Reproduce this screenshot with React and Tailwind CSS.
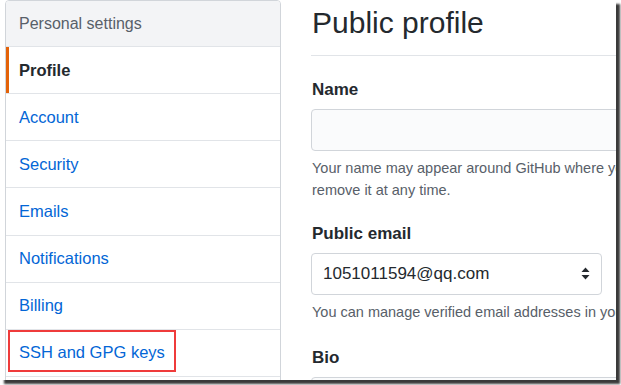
import React from "react";

const items = ["Account", "Security", "Emails", "Notifications", "Billing"];

export default function App() {
  return (
    <div className="w-[621px] h-[385px] bg-white overflow-hidden" style={{ fontFamily: '"Liberation Sans", Arial, sans-serif' }}>
      <div className="relative w-[616px] h-[380px] bg-white shadow-[4px_4px_2px_#3a3a3a]">
        <div className="w-[616px] h-[380px] overflow-hidden flex items-start">
          {/* Sidebar */}
          <div className="ml-[5px] w-[276px] shrink-0 border border-[#d1d5da] rounded-t-[4px] overflow-hidden">
            <div className="h-[46px] bg-[#f3f4f6] border-b border-[#e1e4e8] flex items-center pl-[13px] text-[16px] text-[#586069]">
              Personal settings
            </div>
            <div className="relative h-[47.14px] border-b border-[#e1e4e8] flex items-center pl-[13px] text-[16.5px] font-bold text-[#24292e]">
              <div className="absolute left-0 top-0 bottom-0 w-[3px] bg-[#e36209]" />
              Profile
            </div>
            {items.map((t) => (
              <div key={t} className="h-[47.14px] border-b border-[#e1e4e8] flex items-center pl-[13px] text-[16.5px] text-[#0366d6]">
                {t}
              </div>
            ))}
            <div className="relative h-[47.14px] border-b border-[#e1e4e8] flex items-center pl-[13px] text-[16.5px] text-[#0366d6]">
              SSH and GPG keys
              <div className="absolute left-[2px] top-[0.5px] w-[168px] h-[42px] border-2 border-[#ef3b3b]" />
            </div>
            <div className="h-[47px]" />
          </div>

          {/* Main */}
          <div className="ml-[30px] w-[440px] shrink-0 flex flex-col">
            <div className="shrink-0 h-[56px] border-b border-[#e1e4e8] pt-[4px]">
              <div className="text-[30px] leading-[37.5px] text-[#24292e] pl-[1px]">Public profile</div>
            </div>

            <div className="shrink-0 mt-[21px] text-[17px] leading-[25px] font-bold text-[#24292e] pl-[1px]">Name</div>
            <div className="shrink-0 mt-[7px] h-[42px] w-[440px] bg-[#fafbfc] border border-[#d1d5da] rounded-[4px]" />
            <div className="shrink-0 mt-[5.5px] text-[14.5px] leading-[22.5px] text-[#586069] whitespace-nowrap pl-[1px]">
              Your name may appear around GitHub where you contribute or are mentioned. You can
              <br />
              remove it at any time.
            </div>

            <div className="shrink-0 mt-[19px] text-[17px] leading-[25px] font-bold text-[#24292e] pl-[1px]">Public email</div>
            <div className="shrink-0 mt-[7.5px] h-[41.5px] w-[291px] bg-white border border-[#d1d5da] rounded-[4px] flex items-center pl-[11px] pr-[10px]">
              <span className="text-[17px] text-[#24292e] flex-1">1051011594@qq.com</span>
              <svg width="9" height="13" viewBox="0 0 9 13" className="mr-[1px]">
                <path d="M4.5 0.5 L8.5 5 L0.5 5 Z" fill="#24292e" />
                <path d="M0.5 8 L8.5 8 L4.5 12.5 Z" fill="#24292e" />
              </svg>
            </div>
            <div className="shrink-0 mt-[6.5px] text-[14.5px] leading-[22.5px] text-[#586069] whitespace-nowrap pl-[1px]">
              You can manage verified email addresses in your email settings.
            </div>

            <div className="shrink-0 mt-[21px] text-[17px] leading-[25px] font-bold text-[#24292e] pl-[1px]">Bio</div>
            <div className="shrink-0 mt-[7.5px] h-[80px] w-[440px] bg-[#fafbfc] border border-[#d1d5da] rounded-[4px]" />
          </div>
        </div>
      </div>
    </div>
  );
}
